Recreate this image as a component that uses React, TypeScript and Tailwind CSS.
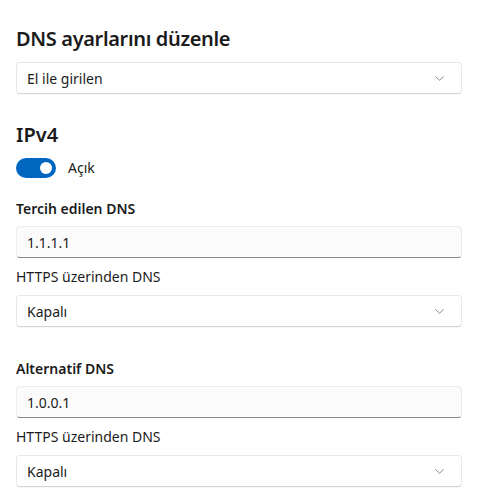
import React from "react";

const font = { fontFamily: '"Segoe UI", "Noto Sans", "Open Sans", sans-serif' };

const Chevron = () => (
  <svg width="9" height="5" viewBox="0 0 9 5" fill="none" className="text-[#8a8a8a]">
    <path d="M0.75 0.75l3.75 3.5 3.75-3.5" stroke="currentColor" strokeWidth="1" strokeLinecap="round" strokeLinejoin="round" />
  </svg>
);

const Select = ({ value }: { value: string }) => (
  <div className="flex h-8 w-full items-center justify-between rounded-[4px] border border-[#e8e8e8] border-b-[#d4d4d4] bg-white pl-[10px] pr-[17px] text-[14px] text-[#1b1b1b] shadow-[0_1px_1px_rgba(0,0,0,0.03)]">
    <span>{value}</span>
    <Chevron />
  </div>
);

const TextBox = ({ value }: { value: string }) => (
  <div className="flex h-8 w-full items-center rounded-[4px] border border-[#ececec] border-b-[#8a8a8a] bg-[#fbfbfb] pl-[10px] text-[14px] text-[#1b1b1b]">
    {value}
  </div>
);

const DnsBlock = ({ title, address }: { title: string; address: string }) => (
  <div className="flex flex-col">
    <div className="h-5 text-[14px] font-semibold leading-5 text-[#1b1b1b]">{title}</div>
    <div className="mt-[7px]">
      <TextBox value={address} />
    </div>
    <div className="mt-[9px] h-5 text-[14px] leading-5 text-[#1b1b1b]">HTTPS üzerinden DNS</div>
    <div className="mt-2">
      <Select value="Kapalı" />
    </div>
  </div>
);

export default function App() {
  return (
    <div className="min-h-[504px] w-[483px] bg-white" style={font}>
      <div className="flex w-[462px] flex-col pl-4 pt-[25px]">
        <h1 className="h-7 text-[20px] font-semibold leading-7 tracking-[-0.35px] text-[#1b1b1b]">DNS ayarlarını düzenle</h1>
        <div className="mt-[9px]">
          <Select value="El ile girilen" />
        </div>

        <h2 className="mt-[27px] h-7 text-[20px] font-semibold leading-7 text-[#1b1b1b]">IPv4</h2>
        <div className="mt-2 flex items-center gap-3">
          <div className="flex h-5 w-10 items-center justify-end rounded-full bg-[#0067c0] pr-1">
            <div className="h-3 w-3 rounded-full bg-white" />
          </div>
          <span className="text-[14px] text-[#1b1b1b]">Açık</span>
        </div>

        <div className="mt-[21px]">
          <DnsBlock title="Tercih edilen DNS" address="1.1.1.1" />
        </div>
        <div className="mt-[32px]">
          <DnsBlock title="Alternatif DNS" address="1.0.0.1" />
        </div>
      </div>
    </div>
  );
}
